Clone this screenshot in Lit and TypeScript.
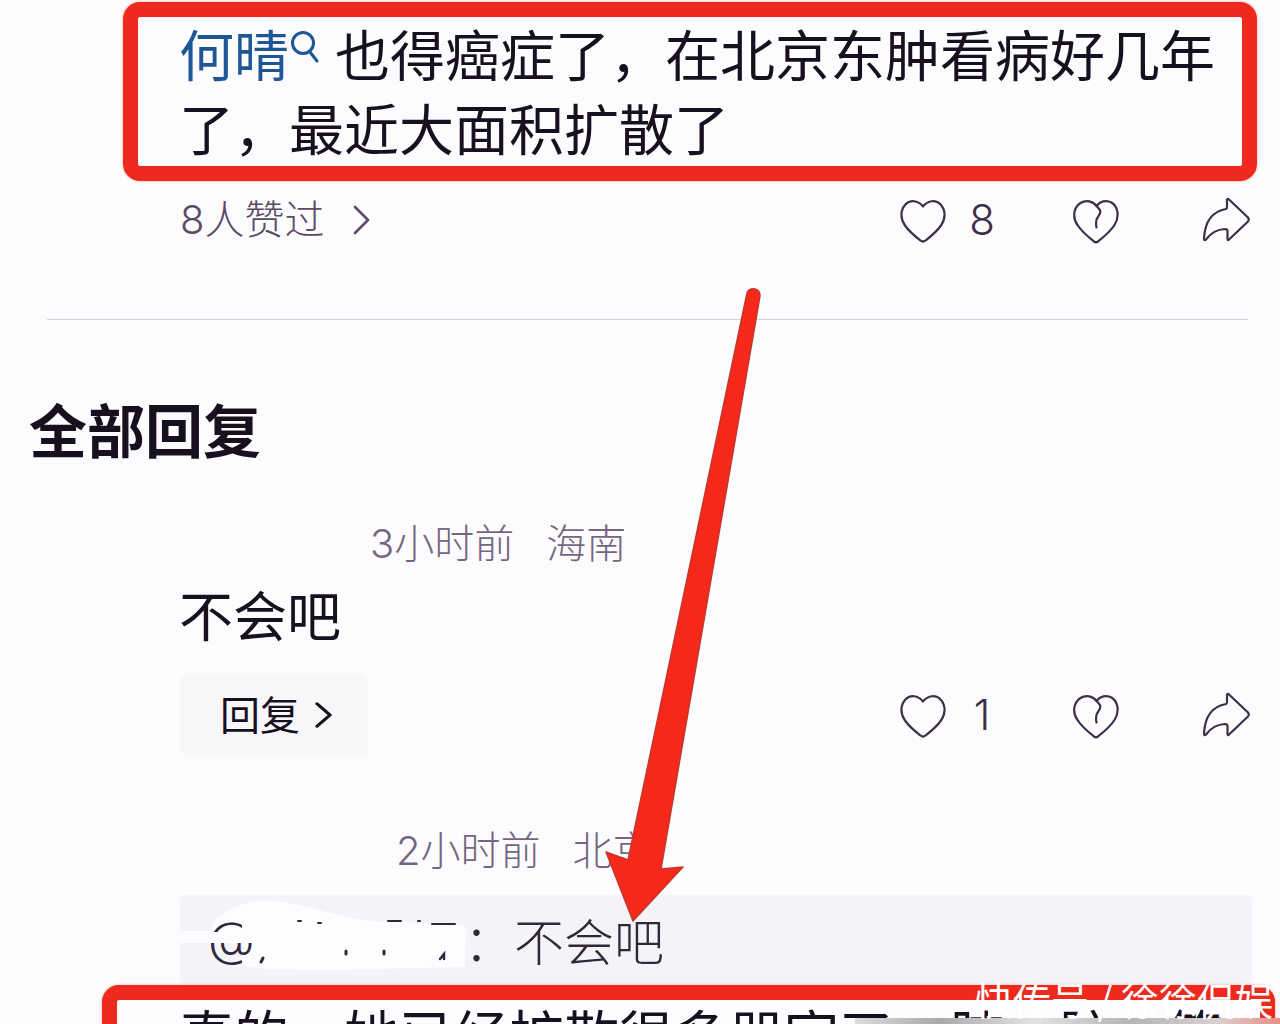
import { LitElement, html, svg, css } from "lit";
import { customElement, property } from "lit/decorators.js";

@customElement("comment-actions")
class CommentActions extends LitElement {
  @property({ type: Number }) count = 0;

  static styles = css`
    :host {
      display: grid;
      grid-template-columns: 172px 130px 48px;
      align-items: center;
    }
    .action {
      display: flex;
      align-items: center;
      gap: 20px;
      height: 48px;
      padding: 0;
      border: 0;
      background: none;
      color: #3d2f48;
      font: 300 42px/48px Inter, "Noto Sans CJK SC", sans-serif;
      cursor: pointer;
    }
    .count {
      min-width: 28px;
      text-align: center;
    }
    .icon {
      flex: none;
      width: 48px;
      height: 48px;
      fill: none;
      stroke: currentColor;
      stroke-width: 2.2;
      stroke-linecap: round;
      stroke-linejoin: round;
    }
  `;

  render() {
    return html`
      <button class="action" aria-label="赞 ${this.count}">
        <svg class="icon" viewBox="0 0 48 48" aria-hidden="true">
          <path d="M23 10.500C28 4 36 3.500 41 9C46 15 45.500 23 41 29.500C36.500 36 30 41 25.500 44.500Q23 46.500 20.500 44.500C16 41 9.500 36 5 29.500C0.500 23 0 15 5 9C10 3.500 18 4 23 10.500Z" />
        </svg>
        <span class="count">${this.count}</span>
      </button>
      <button class="action" aria-label="踩">
        <svg class="icon" viewBox="0 0 48 48" aria-hidden="true">
          <path d="M24.500 10C21 5 14 3.500 8.500 7C1 12 0.500 22 5.500 29C10 36 17 41.500 22 45.500Q24 47 26 45.500C31 41.500 38 36 42.500 29C47.500 21 46.500 11 39.500 6.500C34 3.500 28 5.500 24.500 10L28 14Q29 17 26.500 20Q23 24 24.500 31.500" />
        </svg>
      </button>
      <button class="action" aria-label="分享">
        <svg class="icon" viewBox="0 0 48 48" aria-hidden="true">
          <path d="M25 3.500Q25.500 2 27 3.500L46 21.500Q47.500 23.500 46 25.500L27 43.500Q25.500 45 25.500 42.500V35Q25.500 33 23 33C14 33.500 8 38 4 43.500Q2 45.500 2 42C3 26 10 15.500 24 13Q25 12.500 25 11Z" />
        </svg>
      </button>
    `;
  }
}

@customElement("app-root")
class AppRoot extends LitElement {
  static styles = css`
    :host {
      display: block;
      position: relative;
      height: 100vh;
      overflow: hidden;
      background: #fcfcff;
      color: #17101f;
      font-family: "Noto Sans CJK SC", sans-serif;
    }
    .framed {
      border: 15px solid #ee2a1e;
      border-radius: 17px;
      box-shadow: 0 0 3px #f8a49c;
    }
    .body {
      margin: 0;
      font-size: 55px;
      line-height: 74px;
    }
    .lead {
      margin: 2px 23px 0 123px;
      padding: 0 0 3px 41px;
    }
    .lead .body {
      margin-top: -2px;
    }
    .topic {
      color: #1f5796;
      text-decoration: none;
    }
    .search {
      width: 30px;
      height: 34px;
      margin: 0 15px 0 1px;
      vertical-align: 12px;
      fill: none;
      stroke: currentColor;
      stroke-width: 3;
      stroke-linecap: round;
    }
    .row {
      display: flex;
      justify-content: space-between;
      align-items: center;
      padding: 0 30px 0 180px;
    }
    .likes {
      display: flex;
      align-items: center;
      gap: 28px;
      color: #5b4b66;
      font-family: Inter, "Noto Sans CJK SC", sans-serif;
      font-size: 40px;
      font-weight: 300;
      line-height: 48px;
      text-decoration: none;
    }
    .chevron {
      width: 18px;
      height: 30px;
      fill: none;
      stroke: currentColor;
      stroke-width: 2.6;
      stroke-linecap: round;
      stroke-linejoin: round;
    }
    .first {
      margin-top: 15px;
    }
    .divider {
      height: 0;
      margin: 75px 32px 0 47px;
      border: 0;
      border-top: 1px solid #cbd5e0;
    }
    .heading {
      margin: 68px 0 0 29px;
      font-size: 58px;
      font-weight: 700;
      line-height: 80px;
    }
    .meta {
      display: flex;
      gap: 32px;
      color: #75667f;
      font-family: Inter, "Noto Sans CJK SC", sans-serif;
      font-size: 40px;
      font-weight: 300;
      line-height: 56px;
    }
    .meta-a {
      margin: 48px 0 0 370px;
    }
    .meta-b {
      margin: 68px 0 0 396px;
    }
    .reply-text {
      margin: 5px 0 24px 179px;
      font-size: 54px;
    }
    .reply {
      display: flex;
      align-items: center;
      gap: 14px;
      height: 80px;
      padding: 0 36px 0 40px;
      border: 0;
      border-radius: 6px;
      background: #f7f7fa;
      color: #17101f;
      font: 400 40px/76px "Noto Sans CJK SC", sans-serif;
      cursor: pointer;
    }
    .reply span {
      padding-bottom: 4px;
    }
    .reply .chevron {
      height: 26px;
      stroke-width: 3.4;
    }
    .quote {
      display: flex;
      position: relative;
      margin: 16px 28px 0 180px;
      padding: 7px 28px 9px;
      border-radius: 6px;
      background: #f4f4f8;
      color: #302739;
      font-size: 50px;
      font-weight: 300;
      line-height: 74px;
    }
    .name {
      position: relative;
      width: 256px;
      font-family: Inter, sans-serif;
      font-size: 48px;
    }
    .smear {
      position: absolute;
      left: 0;
      top: 0;
      width: 300px;
      height: 80px;
    }
    .second {
      position: relative;
      margin: 0 5px 0 102px;
      padding: 0 0 0 62px;
      background: #fcfcff;
      white-space: nowrap;
    }
    .second .body {
      line-height: 64px;
    }
    .arrow {
      position: absolute;
      left: 600px;
      top: 284px;
      width: 170px;
      height: 644px;
      pointer-events: none;
    }
    .strip {
      position: absolute;
      right: 0;
      bottom: 0;
      width: 425px;
      height: 6px;
      background: linear-gradient(90deg, #dcdcdc, #a9a9a9 20%, #e2e2e2 42%, #b5b5b5 65%, #d8d0d0 85%, #e88f88);
    }
    .credit {
      position: absolute;
      right: 7px;
      bottom: 5px;
      color: #fff;
      font-size: 38px;
      line-height: 40px;
      white-space: pre;
    }
  `;

  chevron() {
    return html`<svg class="chevron" viewBox="0 0 18 30" preserveAspectRatio="none" aria-hidden="true">
      <path d="M3 2L16 15L3 28" />
    </svg>`;
  }

  smearBase() {
    return svg`<path fill="#fdfdff" d="M0 36H30L36 24Q62 2 96 6C140 12 170 28 215 27L282 30Q290 34 285 46V72L150 75L84 74L64 58L62 48H0Z" />`;
  }

  smearMarks() {
    return svg`
      <path fill="#fdfdff" d="M0 37H62V20H110V74H84L62 70V64L72 62V48H0Z" />
      <g fill="none" stroke="#302739" stroke-width="2" stroke-linecap="round">
        <path d="M118 26H121M138 28H141M208 26H221M238 26H240M252 29H275" />
        <path d="M81 67L83 63" stroke-width="3" />
        <path d="M166 56V59M204 56V59" stroke-width="3" />
        <path d="M260 64L264 59V64" stroke-width="2.500" />
      </g>`;
  }

  render() {
    return html`
      <main>
        <article>
          <div class="framed lead">
            <p class="body"><a class="topic" href="#topic">何晴<svg class="search" viewBox="0 0 30 34" aria-hidden="true"><circle cx="13" cy="13" r="10.500" /><path d="M20 22L27 31" /></svg></a>也得癌症了，在北京东肿看病好几年了，最近大面积扩散了</p>
          </div>
          <div class="row first">
            <a class="likes" href="#likes"><span>8人赞过</span>${this.chevron()}</a>
            <comment-actions count="8"></comment-actions>
          </div>
        </article>
        <hr class="divider" />
        <section>
          <h2 class="heading">全部回复</h2>
          <article>
            <div class="meta meta-a"><span>3小时前</span><span>海南</span></div>
            <p class="body reply-text">不会吧</p>
            <div class="row">
              <button class="reply"><span>回复</span>${this.chevron()}</button>
              <comment-actions count="1"></comment-actions>
            </div>
          </article>
          <article>
            <div class="meta meta-b"><span>2小时前</span><span>北京</span></div>
            <div class="quote">
              <svg class="smear" viewBox="0 0 300 80" aria-hidden="true">${this.smearBase()}</svg>
              <span class="name">@</span><span>：不会吧</span>
              <svg class="smear" viewBox="0 0 300 80" aria-hidden="true">${this.smearMarks()}</svg>
            </div>
            <div class="framed second">
              <p class="body">真的，她已经扩散很多器官了，肺，脑，等</p>
            </div>
          </article>
        </section>
      </main>
      <svg class="arrow" viewBox="0 0 170 644" aria-hidden="true">
        <path d="M147 9Q149 4 155 5Q160 6 160 12L61 585L83 583L33 637L6 568L28 576Z" fill="#f5281a" stroke="#c5372c" stroke-width="1.500" stroke-linejoin="round" />
      </svg>
      <div class="strip"></div>
      <div class="credit">快传号 / 徐徐侃娱</div>
    `;
  }
}
